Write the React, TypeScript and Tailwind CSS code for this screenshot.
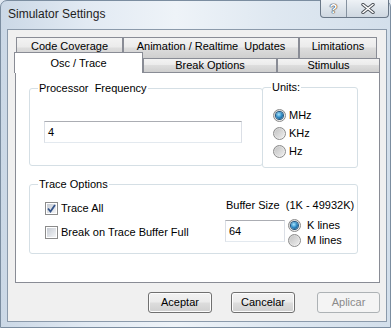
import React from 'react';

const Radio = ({ checked }: { checked?: boolean }) => (
  <span className="flex h-[13px] w-[13px] shrink-0 items-center justify-center rounded-full border border-[#8b8b8b] bg-[linear-gradient(135deg,#cfcfcf,#f8f8f8)]">
    {checked ? (
      <span className="h-[7px] w-[7px] rounded-full bg-[radial-gradient(circle_at_40%_35%,#a8e6ff,#2b88c4_50%,#0d416c)] shadow-[0_0_0_1px_#23567f]" />
    ) : (
      <span className="h-[9px] w-[9px] rounded-full bg-[linear-gradient(135deg,#c4c4c4,#ececec)]" />
    )}
  </span>
);

const Check = ({ checked }: { checked?: boolean }) => (
  <span className="flex h-[13px] w-[13px] shrink-0 items-center justify-center border border-[#8b8b8b] bg-white p-[1px]">
    <span className="flex h-full w-full items-center justify-center bg-[linear-gradient(135deg,#c6cbd3,#f4f5f7)]">
      {checked && (
        <svg width="9" height="9" viewBox="0 0 9 9">
          <path d="M1 4.5 L3.5 7.5 L8 1" fill="none" stroke="#34548a" strokeWidth="1.8" />
        </svg>
      )}
    </span>
  </span>
);

const Tab = ({ label, w, selected, h }: { label: string; w: string; selected?: boolean; h: string }) => (
  <div
    className={`${w} ${h} flex shrink-0 justify-center border border-b-0 border-[#898c95] text-[11px] leading-[13px] ${
      selected
        ? 'relative z-10 -mb-px bg-white pt-[4px]'
        : 'bg-[linear-gradient(#f3f3f3,#ebebeb_45%,#dddddd_50%,#cfcfcf)] pt-[2px]'
    }`}
  >
    <span className="whitespace-pre">{label}</span>
  </div>
);

const GroupLabel = ({ text }: { text: string }) => (
  <div className="-mt-[7px] ml-[8px] w-fit whitespace-pre bg-white px-[1px] leading-[13px]">{text}</div>
);

const Button = ({ label, disabled, className }: { label: string; disabled?: boolean; className?: string }) => (
  <div
    className={`flex h-[21px] items-center justify-center rounded-[3px] border text-[11px] ${className} ${
      disabled
        ? 'border-[#adb2b5] bg-[#f4f4f4] text-[#8a8a8a]'
        : 'border-[#707070] bg-[linear-gradient(#f2f2f2,#ebebeb_48%,#dddddd_52%,#cfcfcf)] text-black shadow-[inset_0_0_0_1px_#fcfcfc]'
    }`}
  >
    {label}
  </div>
);

export default function App() {
  return (
    <div className="h-[328px] w-[391px] overflow-hidden bg-[#e0e8f1] font-['Liberation_Sans',Arial,sans-serif] text-[11px] text-black">
      <div className="flex h-full w-full flex-col rounded-t-[7px] border border-[#7b8da0] bg-[linear-gradient(90deg,#cbd8e6,#e2eaf3_22%,#eef3f8_45%,#dfe8f1_70%,#d3dfeb)]">
        {/* Title bar */}
        <div className="flex h-[28px] shrink-0 items-start justify-between">
          <span className="mt-[6px] ml-[7px] text-[12px] leading-[15px] text-[#1e1e1e]">Simulator Settings</span>
          <div className="mr-[1px] -mt-px flex h-[18px] overflow-hidden rounded-b-[4px] border border-t-0 border-[#6a7888] bg-[linear-gradient(#eef2f6,#dde4eb_50%,#cfd8e1)]">
            <div className="flex w-[26px] items-center justify-center border-r border-[#8592a0] text-[13px] font-bold text-white [text-shadow:0_0_1px_#333,0_0_1px_#333,0_0_1px_#333]">
              ?
            </div>
            <div className="flex w-[41px] items-center justify-center">
              <svg width="14" height="11" viewBox="0 0 14 11">
                <path d="M2 1.5 L12 9.5 M12 1.5 L2 9.5" stroke="#4a4f56" strokeWidth="3.4" strokeLinecap="round" />
                <path d="M2 1.5 L12 9.5 M12 1.5 L2 9.5" stroke="#ffffff" strokeWidth="1.6" strokeLinecap="round" />
              </svg>
            </div>
          </div>
        </div>

        {/* Client area */}
        <div className="ml-[6px] h-[293px] w-[380px] shrink-0 border border-[#8b9aab] bg-[#f0f0f0] pt-[7px] pl-[7px]">
          <div className="ml-[1px] flex">
            <Tab label="Code Coverage" w="w-[107px]" h="h-[21px]" />
            <Tab label="Animation / Realtime  Updates" w="w-[176px]" h="h-[21px]" />
            <Tab label="Limitations" w="w-[78px]" h="h-[21px]" />
          </div>
          <div className="-ml-px flex h-[14px] items-end">
            <Tab label="Osc / Trace" w="w-[129px]" h="h-[21px]" selected />
            <div className="flex h-[14px] w-[134px] shrink-0 items-center justify-center border border-b-0 border-[#898c95] bg-[linear-gradient(#f3f3f3,#ebebeb_45%,#dddddd_50%,#cfcfcf)] leading-[13px]">
              Break Options
            </div>
            <div className="flex h-[14px] w-[103px] shrink-0 items-center justify-center border border-b-0 border-[#898c95] bg-[linear-gradient(#f3f3f3,#ebebeb_45%,#dddddd_50%,#cfcfcf)] leading-[13px]">
              Stimulus
            </div>
          </div>

          {/* Panel */}
          <div className="h-[211px] w-[365px] border border-[#898c95] bg-white pt-[14px] pl-[13px]">
            <div className="flex items-start">
              <div className="mt-[1px] h-[78px] w-[234px] rounded-[3px] border border-[#d5dfe5]">
                <GroupLabel text="Processor  Frequency" />
                <div className="mt-[26px] ml-[14px] flex h-[22px] w-[198px] items-center border border-t-[#abadb3] border-r-[#dbdfe6] border-b-[#e3e9ef] border-l-[#dbdfe6] pl-[3px]">
                  4
                </div>
              </div>
              <div className="relative -ml-px h-[81px] w-[96px] rounded-[3px] border border-[#d5dfe5] bg-white">
                <GroupLabel text="Units:" />
                <div className="mt-[12px] flex flex-col">
                  <div className="ml-[10px] flex h-[18px] items-center gap-[3px]">
                    <Radio checked />
                    <span>MHz</span>
                  </div>
                  <div className="ml-[10px] flex h-[18px] items-center gap-[3px]">
                    <Radio />
                    <span>KHz</span>
                  </div>
                  <div className="ml-[10px] flex h-[18px] items-center gap-[3px]">
                    <Radio />
                    <span>Hz</span>
                  </div>
                </div>
              </div>
            </div>

            <div className="mt-[16px] h-[70px] w-[329px] rounded-[3px] border border-[#d5dfe5]">
              <GroupLabel text="Trace Options" />
              <div className="flex">
                <div className="ml-[15px] w-[180px] pt-[8px]">
                  <div className="flex h-[18px] items-center gap-[3px]">
                    <Check checked />
                    <span>Trace All</span>
                  </div>
                  <div className="mt-[6px] flex h-[18px] items-center gap-[3px]">
                    <Check />
                    <span>Break on Trace Buffer Full</span>
                  </div>
                </div>
                <div className="pt-[8px]">
                  <div className="ml-[1px] whitespace-pre leading-[13px]">Buffer Size  (1K - 49932K)</div>
                  <div className="mt-[8px] flex items-start">
                    <div className="flex h-[22px] w-[60px] items-center border border-t-[#abadb3] border-r-[#dbdfe6] border-b-[#e3e9ef] border-l-[#dbdfe6] pl-[3px]">
                      64
                    </div>
                    <div className="-mt-[2px] ml-[3px] flex flex-col">
                      <div className="flex h-[15px] items-center gap-[6px]">
                        <Radio checked />
                        <span>K lines</span>
                      </div>
                      <div className="flex h-[15px] items-center gap-[6px]">
                        <Radio />
                        <span>M lines</span>
                      </div>
                    </div>
                  </div>
                </div>
              </div>
            </div>
          </div>

          {/* Buttons */}
          <div className="mt-[9px] flex w-[365px] justify-end">
            <Button label="Aceptar" className="w-[64px]" />
            <Button label="Cancelar" className="ml-[19px] w-[64px]" />
            <Button label="Aplicar" className="ml-[22px] w-[63px]" disabled />
          </div>
        </div>
      </div>
    </div>
  );
}
